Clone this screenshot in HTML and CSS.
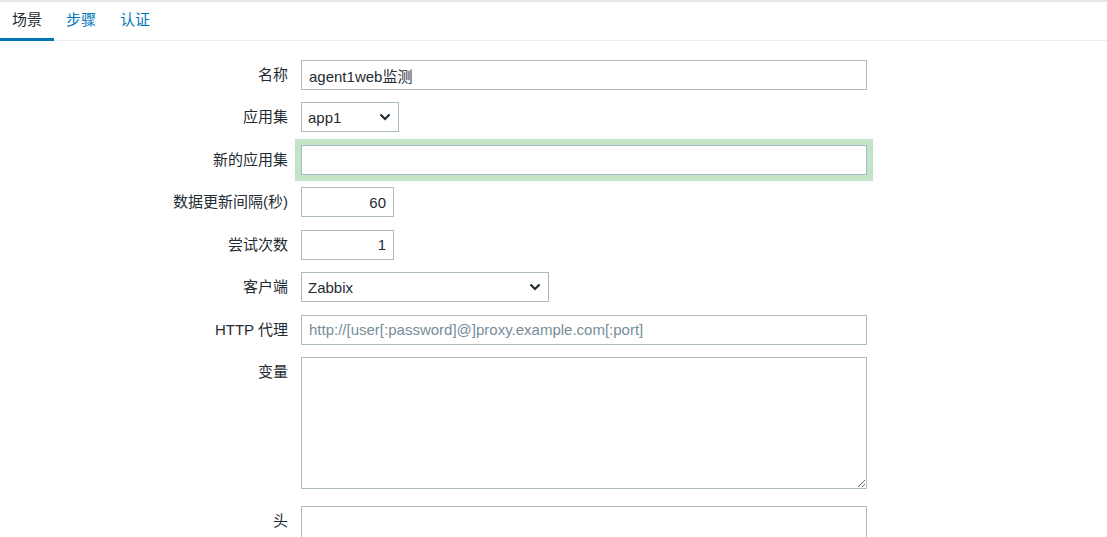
FILE: index.html
```html
<!DOCTYPE html>
<html lang="zh">
<head>
<meta charset="utf-8">
<link rel="stylesheet" href="styles.css">
</head>
<body>
<div class="page">
  <ul class="tabs">
    <li class="tab active">场景</li>
    <li class="tab"><a href="#">步骤</a></li>
    <li class="tab"><a href="#">认证</a></li>
  </ul>
  <form class="form">
    <label class="lbl">名称</label>
    <div class="ctl"><input class="inp w-wide" type="text" value="agent1web监测"></div>

    <label class="lbl">应用集</label>
    <div class="ctl"><div class="select w-app"><span>app1</span><svg class="chev" width="12" height="8" viewBox="0 0 12 8"><path d="M1.5 1.5 L6 6 L10.5 1.5" fill="none" stroke="#1f2c33" stroke-width="2.2"/></svg></div></div>

    <label class="lbl">新的应用集</label>
    <div class="ctl"><input class="inp w-wide hl" type="text" value=""></div>

    <label class="lbl">数据更新间隔(秒)</label>
    <div class="ctl"><input class="inp w-num num" type="text" value="60"></div>

    <label class="lbl">尝试次数</label>
    <div class="ctl"><input class="inp w-num num" type="text" value="1"></div>

    <label class="lbl">客户端</label>
    <div class="ctl"><div class="select w-client"><span>Zabbix</span><svg class="chev" width="12" height="8" viewBox="0 0 12 8"><path d="M1.5 1.5 L6 6 L10.5 1.5" fill="none" stroke="#1f2c33" stroke-width="2.2"/></svg></div></div>

    <label class="lbl">HTTP 代理</label>
    <div class="ctl"><input class="inp w-wide" type="text" placeholder="http://[user[:password]@]proxy.example.com[:port]"></div>

    <label class="lbl">变量</label>
    <div class="ctl tall"><textarea class="ta w-wide"></textarea></div>

    <label class="lbl">头</label>
    <div class="ctl"><div class="inp w-wide box"></div></div>
  </form>
</div>
</body>
</html>
```

FILE: styles.css
```css
html, body {
  margin: 0;
  padding: 0;
  background: #ffffff;
}
body {
  font-family: "Liberation Sans", Arial, "Noto Sans CJK SC", sans-serif;
  font-size: 15px;
  color: #1f2c33;
  overflow: hidden;
  height: 537px;
}
.page {
  border-top: 2px solid #e4e8eb;
}
.tabs {
  list-style: none;
  margin: 0;
  padding: 0;
  display: flex;
  height: 38px;
  border-bottom: 1px solid #ebeef0;
}
.tab {
  padding: 0 12px;
  line-height: 36px;
  border-bottom: 3px solid transparent;
  margin-bottom: -1px;
  white-space: nowrap;
}
.tab.active {
  border-bottom-color: #0275b8;
  color: #1f2c33;
}
.tab a {
  color: #0275b8;
  text-decoration: none;
}
.form {
  display: grid;
  grid-template-columns: 288px 1fr;
  column-gap: 13px;
  row-gap: 12.43px;
  padding-top: 19px;
}
.lbl {
  text-align: right;
  line-height: 30px;
  white-space: nowrap;
  align-self: start;
}
.ctl {
  display: flex;
  align-items: flex-start;
}
.ctl.tall { margin-bottom: 4.5px; }
.inp, .select, .ta {
  box-sizing: border-box;
  height: 30px;
  border: 1px solid #acbbc2;
  background: #ffffff;
  font-family: "Liberation Sans", Arial, "Noto Sans CJK SC", sans-serif;
  font-size: 15px;
  color: #1f2c33;
  padding: 0 7px;
  margin: 0;
  border-radius: 0;
  outline: none;
}
.inp::placeholder { color: #768d99; opacity: 1; }
.w-wide { width: 566px; }
.w-num { width: 93px; }
.w-app { width: 98px; }
.w-client { width: 248px; }
.num { text-align: right; }
.hl {
  box-shadow: 0 0 0 6px #c4e4c7;
}
.select {
  display: flex;
  align-items: center;
  justify-content: space-between;
  padding: 0 6px 0 6px;
}
.chev { display: block; margin-right: 1px; }
.ta {
  height: 132px;
  resize: both;
  padding: 5px 7px;
}
.box { height: 40px; }
```
